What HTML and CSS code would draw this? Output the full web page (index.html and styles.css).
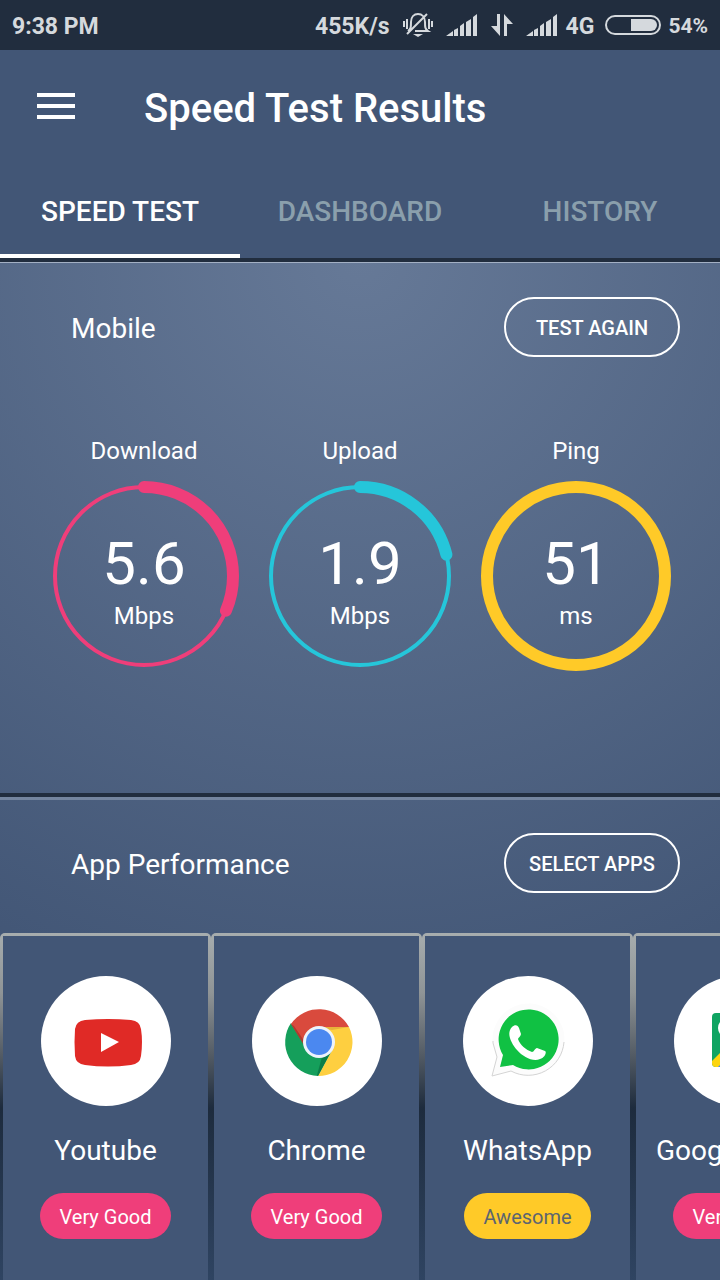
FILE: index.html
```html
<!DOCTYPE html>
<html lang="en">
<head>
    <meta charset="UTF-8">
    <meta name="viewport" content="width=device-width, initial-scale=1.0">
    <title>Speed Test Results</title>
    <link rel="stylesheet" href="styles.css">
</head>
<body>

    <div class="status-bar">
        <span class="clock">9:38 PM</span>
        <span>455K/s</span>
        <svg class="bell" width="30" height="26" viewBox="0 0 30 26" fill="none" stroke="#d5d9dd" stroke-width="2">
            <path d="M5 19c3-2 3-4 3-9 0-5 3-8 7-8s7 3 7 8 0 7 3 9H12M4 22L24 2"/>
            <path d="M1 9v6M4 7v10M26 7v10M29 9v6"/>
            <path d="M10 22h10l-5 3z" fill="#d5d9dd" stroke="none"/>
        </svg>
        <svg class="signal" width="32" height="22" viewBox="0 0 32 22" fill="#d5d9dd">
            <path d="M0 22l7-5v5zM8 16l4-2v8H8zM14 12l4-3v13h-4zM20 8l5-3v17h-5zM27 3l4-3v22h-4z"/>
        </svg>
        <svg class="arrows" width="22" height="22" viewBox="0 0 22 22" fill="#d5d9dd">
            <path d="M6 0h3v22L0 12h6zM13 0l9 10h-6v12h-3z"/>
        </svg>
        <svg class="signal" width="32" height="22" viewBox="0 0 32 22" fill="#d5d9dd">
            <path d="M0 22l7-5v5zM8 16l4-2v8H8zM14 12l4-3v13h-4zM20 8l5-3v17h-5zM27 3l4-3v22h-4z"/>
        </svg>
        <span class="network">4G</span>
        <svg class="battery" width="56" height="20" viewBox="0 0 56 20">
            <rect x="1" y="1" width="54" height="18" rx="9" fill="none" stroke="#d5d9dd" stroke-width="2"/>
            <path d="M26 4h20a6 6 0 0 1 0 12H26z" fill="#d5d9dd"/>
        </svg>
        <span class="percent">54%</span>
    </div>

    <header>
        <div class="title-bar">
            <button class="menu-btn" aria-label="Menu">
                <svg width="38" height="26" viewBox="0 0 38 26" fill="#fff">
                    <path d="M0 0h38v4H0zM0 11h38v4H0zM0 22h38v4H0z"/>
                </svg>
            </button>
            <h1>Speed Test Results</h1>
        </div>
        <nav class="tabs">
            <a href="#speed" class="active">SPEED TEST</a>
            <a href="#dashboard">DASHBOARD</a>
            <a href="#history">HISTORY</a>
        </nav>
    </header>

    <main>
        <section class="speed" id="speed">
            <div class="section-head">
                <h2>Mobile</h2>
                <button class="outline-btn">TEST AGAIN</button>
            </div>
            <div class="gauges">
                <div class="gauge pink">
                    <h3>Download</h3>
                    <div class="dial">
                        <svg width="192" height="192" viewBox="0 0 192 192">
                            <circle class="track" cx="96" cy="96" r="89"/>
                            <circle class="bar" cx="96" cy="96" r="89" pathLength="360" stroke-dasharray="113 360"/>
                        </svg>
                        <div class="reading">
                            <span class="value">5.6</span>
                            <span class="unit">Mbps</span>
                        </div>
                    </div>
                </div>
                <div class="gauge cyan">
                    <h3>Upload</h3>
                    <div class="dial">
                        <svg width="192" height="192" viewBox="0 0 192 192">
                            <circle class="track" cx="96" cy="96" r="89"/>
                            <circle class="bar" cx="96" cy="96" r="89" pathLength="360" stroke-dasharray="76 360"/>
                        </svg>
                        <div class="reading">
                            <span class="value">1.9</span>
                            <span class="unit">Mbps</span>
                        </div>
                    </div>
                </div>
                <div class="gauge yellow">
                    <h3>Ping</h3>
                    <div class="dial">
                        <svg width="192" height="192" viewBox="0 0 192 192">
                            <circle class="bar" cx="96" cy="96" r="89"/>
                        </svg>
                        <div class="reading">
                            <span class="value">51</span>
                            <span class="unit">ms</span>
                        </div>
                    </div>
                </div>
            </div>
        </section>

        <section class="apps">
            <div class="section-head">
                <h2>App Performance</h2>
                <button class="outline-btn">SELECT APPS</button>
            </div>
            <div class="app-list">
                <div class="app-card">
                    <div class="app-body">
                        <div class="app-icon">
                            <svg width="76" height="76" viewBox="0 0 76 76">
                                <path d="M17 17Q40 15 63 17Q72 18 73 26Q75 39 73 53Q72 61 63 62Q40 65 17 62Q8 61 7 53Q6 39 7 26Q8 18 17 17z" fill="#e02a26"/>
                                <path d="M33 30l18 9-18 10z" fill="#fff"/>
                            </svg>
                        </div>
                        <h3>Youtube</h3>
                        <span class="rating">Very Good</span>
                    </div>
                </div>
                <div class="app-card">
                    <div class="app-body">
                        <div class="app-icon">
                            <svg width="76" height="76" viewBox="0 0 76 76">
                                <path d="M40 24h30A34 34 0 0 1 39 73L53 47 40 39z" fill="#fecf40"/>
                                <path d="M40 39L53 47 39 73A34 34 0 0 1 12 20L30 45z" fill="#159f5b"/>
                                <path d="M53 47L39 73 38 72 43 54z" fill="#0c7d47"/>
                                <path d="M12 21A34 34 0 0 1 70 24H40L28 46z" fill="#d94a3d"/>
                                <path d="M12 21L15 23 28 42 26 44z" fill="#b03a30"/>
                                <path d="M40 24h30l-17 3z" fill="#e8b23a"/>
                                <circle cx="40" cy="39" r="16" fill="#eef3fa"/>
                                <circle cx="40" cy="39" r="13" fill="#4b88f0"/>
                            </svg>
                        </div>
                        <h3>Chrome</h3>
                        <span class="rating">Very Good</span>
                    </div>
                </div>
                <div class="app-card">
                    <div class="app-body">
                        <div class="app-icon">
                            <svg width="76" height="76" viewBox="1 0 76 76">
                                <path d="M3 73L8 54A36 36 0 1 1 22 68z" fill="#fcfcfc"/>
                                <path d="M4 38L4 40 8 54 3 73 22 68A36 36 0 0 0 75 39" fill="none" stroke="#d4d4d4"/>
                                <path d="M11 64L14 52A30 30 0 1 1 24 62z" fill="#10c143"/>
                                <path d="M23 24c3-3 6-2 7 1l2 6c0 2-3 4-3 5 2 6 8 11 14 13 2 0 3-4 5-4l8 3c2 1 0 7-5 8-7 3-17-2-23-9-6-7-11-17-5-23z" fill="#fff"/>
                            </svg>
                        </div>
                        <h3>WhatsApp</h3>
                        <span class="rating awesome">Awesome</span>
                    </div>
                </div>
                <div class="app-card">
                    <div class="app-body">
                        <div class="app-icon">
                            <svg width="76" height="76" viewBox="0 0 76 76">
                                <rect x="11" y="10" width="54" height="54" rx="4" fill="#0fa462"/>
                                <path d="M15 64L38 41 61 64z" fill="#4a8af4"/>
                                <path d="M11 58L46 23l6 6-35 35h-2q-4 0-4-4z" fill="#fdd50f"/>
                                <circle cx="27" cy="25" r="8" fill="none" stroke="#fff" stroke-width="4"/>
                            </svg>
                        </div>
                        <h3>Google Maps</h3>
                        <span class="rating">Very Good</span>
                    </div>
                </div>
            </div>
        </section>
    </main>

</body>
</html>
```
FILE: styles.css
```css
* {
    box-sizing: border-box;
}

body {
    font-family: Roboto, 'Noto Sans', sans-serif;
    margin: 0;
    min-height: 100vh;
    display: flex;
    flex-direction: column;
    background-color: #425676;
    color: #fff;
    overflow-x: hidden;
}

h1, h2, h3 {
    margin: 0;
    font-weight: 400;
}

button {
    font-family: inherit;
    color: inherit;
    background: none;
    border: none;
    padding: 0;
    cursor: pointer;
}

svg {
    display: block;
}

.status-bar {
    display: flex;
    align-items: center;
    height: 50px;
    padding: 2px 12px 0;
    background-color: #212d3e;
    color: #d5d9dd;
    font-size: 23px;
    font-weight: 700;
}

.status-bar svg {
    margin-bottom: 2px;
}

.clock {
    margin-right: auto;
}

.bell,
.signal,
.arrows {
    margin-left: 13px;
}

.network {
    margin: 0 11px 0 8px;
}

.percent {
    margin-left: 7px;
    font-size: 21px;
}

.title-bar {
    display: flex;
    align-items: center;
    height: 112px;
    padding: 0 37px;
}

h1 {
    margin-left: 69px;
    padding-top: 4px;
    font-size: 40px;
    font-weight: 500;
}

.tabs {
    display: flex;
    height: 96px;
}

.tabs a {
    flex: 1;
    display: flex;
    align-items: center;
    justify-content: center;
    padding-top: 6px;
    border-bottom: 4px solid transparent;
    color: #8a9fac;
    font-size: 28px;
    font-weight: 500;
    text-decoration: none;
}

.tabs a.active {
    color: #fff;
    border-bottom-color: #fff;
}

main {
    flex: 1;
    display: flex;
    flex-direction: column;
    background: radial-gradient(circle at 50% 0, #667997 0, #425676 780px);
}

.speed {
    border-top: 4px solid #212d3e;
    padding-bottom: 121px;
    box-shadow: inset 0 1px #a3b0c4;
}

.apps {
    flex: 1;
    display: flex;
    flex-direction: column;
    border-top: 4px solid #212d3e;
    box-shadow: inset 0 3px #74859f;
}

.section-head {
    display: flex;
    align-items: center;
    justify-content: space-between;
    padding: 36px 40px 40px 71px;
}

.speed .section-head {
    padding-top: 35px;
}

h2 {
    padding-top: 2px;
    font-size: 28px;
}

.outline-btn {
    width: 176px;
    height: 60px;
    padding-top: 2px;
    border: 2px solid #fff;
    border-radius: 30px;
    font-size: 20px;
    font-weight: 500;
}

.gauges {
    display: grid;
    grid-template-columns: repeat(3, 1fr);
    padding: 40px 36px 0;
}

.gauge {
    display: flex;
    flex-direction: column;
    align-items: center;
    gap: 15px;
}

.gauge h3 {
    font-size: 24px;
    line-height: 28px;
}

.dial {
    display: grid;
}

.dial svg,
.reading {
    grid-area: 1 / 1;
}

.dial circle {
    fill: none;
    stroke: currentColor;
}

.track {
    stroke-width: 4;
}

.bar {
    stroke-width: 12;
    stroke-linecap: round;
    transform: rotate(-90deg);
    transform-origin: center;
}

.pink {
    --accent: #ef3e7a;
}

.cyan {
    --accent: #25c6da;
}

.yellow {
    --accent: #ffca28;
}

.dial svg {
    color: var(--accent);
}

.reading {
    display: flex;
    flex-direction: column;
    align-items: center;
    padding-top: 48px;
}

.value {
    font-size: 60px;
    line-height: 72px;
}

.unit {
    font-size: 24px;
    line-height: 32px;
}

.app-list {
    flex: 1;
    display: flex;
    overflow: hidden;
}

/* the gradient shows through the padding as the card's edge */
.app-card {
    flex: 0 0 211px;
    display: flex;
    padding: 3px 3px 0;
    border-radius: 5px 5px 0 0;
    background: linear-gradient(#a7adae 0, #8f9496 60px, #555d66 120px, #1d2b3d 175px, #2f4462 347px);
}

.app-body {
    flex: 1;
    display: flex;
    flex-direction: column;
    align-items: center;
    padding: 40px 0;
    background-color: #425676;
}

.app-icon {
    display: flex;
    align-items: center;
    justify-content: center;
    width: 130px;
    height: 130px;
    border-radius: 50%;
    background-color: #fff;
}

.app-body h3 {
    margin: 28px 0 26px;
    font-size: 28px;
    line-height: 33px;
    white-space: nowrap;
}

.rating {
    padding: 2px 19px 0;
    border-radius: 23px;
    background-color: #ef3e7a;
    font-size: 20px;
    line-height: 44px;
}

.rating.awesome {
    background-color: #ffca28;
    color: #5c6570;
}
```
